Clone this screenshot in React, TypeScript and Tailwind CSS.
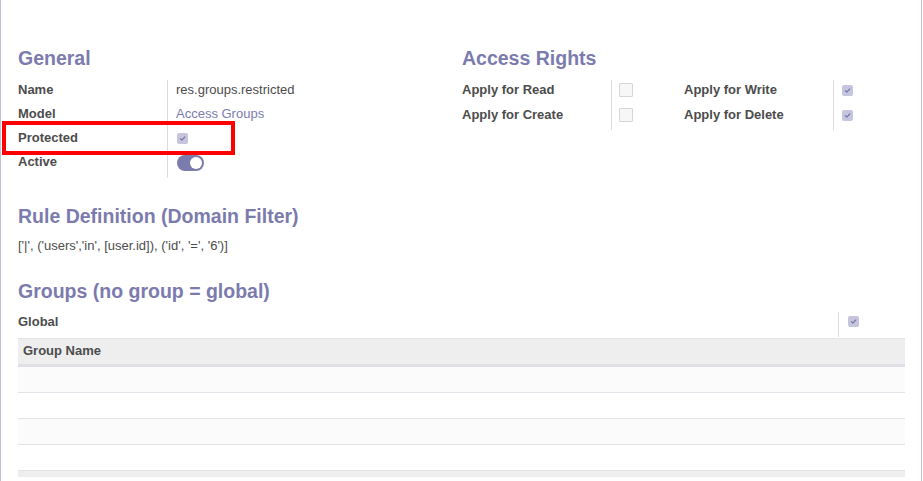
import React from "react";

const font = { fontFamily: '"Liberation Sans", Arial, sans-serif' };

function CheckedBox() {
  return (
    <span className="flex h-[11px] w-[11px] shrink-0 items-center justify-center rounded-[2px] bg-[#c6c5dd]">
      <svg width="7" height="7" viewBox="0 0 8 8" fill="none">
        <path d="M1.5 4.2L3.2 5.8L6.6 2.3" stroke="#7473a6" strokeWidth="1.3" strokeLinecap="round" strokeLinejoin="round" />
      </svg>
    </span>
  );
}

function EmptyBox() {
  return <span className="block h-[14px] w-[14px] shrink-0 rounded-[1px] border border-[#d6d6d6] bg-[#f7f7f7]" />;
}

function Toggle() {
  return (
    <span className="flex h-[16px] w-[27px] items-center justify-end rounded-full bg-[#7c7bad] pr-[2px]">
      <span className="h-[12px] w-[12px] rounded-full bg-white" />
    </span>
  );
}

function Heading({ children }: { children: React.ReactNode }) {
  return <h2 className="h-[24px] text-[19.5px] font-bold leading-[24px] text-[#7c7bad]">{children}</h2>;
}

const labelCls = "w-[150px] border-r border-[#dcdcdc] pt-px text-[13px] font-bold leading-[18px] text-[#4c4c4c]";

function FieldRow({
  label,
  height,
  children,
}: {
  label: string;
  height: string;
  children: React.ReactNode;
}) {
  return (
    <div className={`flex ${height}`}>
      <div className={labelCls}>{label}</div>
      <div className="flex items-start pl-[8px] pt-px text-[13px] leading-[18px]">{children}</div>
    </div>
  );
}

function RightsRow({
  left,
  right,
}: {
  left: string;
  right: string;
}) {
  return (
    <div className="flex h-[25px]">
      <div className={labelCls}>{left}</div>
      <div className="flex w-[72px] items-start pl-[7px] pt-[3px]">
        <EmptyBox />
      </div>
      <div className={labelCls}>{right}</div>
      <div className="flex items-start pl-[8px] pt-[5px]">
        <CheckedBox />
      </div>
    </div>
  );
}

export default function App() {
  const rows = [0, 1, 2, 3];
  return (
    <div className="min-h-[481px] bg-white" style={font}>
      <div className="relative min-h-[481px] w-[922px] border-x border-[#c4c3d6] pl-[17px] pr-[16px] pt-[46px] text-[#4c4c4c]">
        <div className="grid grid-cols-[444px_443px]">
          <div>
            <Heading>General</Heading>
            <div className="mt-[10px]">
              <FieldRow label="Name" height="h-[24px]">
                <span className="text-[#4c4c4c]">res.groups.restricted</span>
              </FieldRow>
              <FieldRow label="Model" height="h-[24px]">
                <span className="text-[#7c7bad]">Access Groups</span>
              </FieldRow>
              <FieldRow label="Protected" height="h-[24px]">
                <span className="flex pl-[1px] pt-[4px]">
                  <CheckedBox />
                </span>
              </FieldRow>
              <FieldRow label="Active" height="h-[26px]">
                <span className="flex pl-[1px] pt-[2px]">
                  <Toggle />
                </span>
              </FieldRow>
            </div>
          </div>
          <div>
            <Heading>Access Rights</Heading>
            <div className="mt-[10px]">
              <RightsRow left="Apply for Read" right="Apply for Write" />
              <RightsRow left="Apply for Create" right="Apply for Delete" />
            </div>
          </div>
        </div>

        <div className="mt-[26px]">
          <Heading>Rule Definition (Domain Filter)</Heading>
        </div>
        <p className="mt-[9px] text-[13px] leading-[18px] text-[#4c4c4c]">
          ['|', ('users','in', [user.id]), ('id', '=', '6')]
        </p>

        <div className="mt-[24px]">
          <Heading>Groups (no group = global)</Heading>
        </div>
        <div className="mt-[9px] flex h-[25px]">
          <div className="w-[821px] border-r border-[#dcdcdc] pt-px text-[13px] font-bold leading-[18px] text-[#4c4c4c]">
            Global
          </div>
          <div className="flex items-start pl-[9px] pt-[4px]">
            <CheckedBox />
          </div>
        </div>

        <div className="mt-px">
          <div className="flex h-[29px] items-center border-t border-b-[3px] border-t-[#e4e4e4] border-b-[#dfe0e6] bg-[#eeeeee] pl-[5px] pb-[2px] text-[13px] font-bold text-[#4c4c4c]">
            Group Name
          </div>
          {rows.map((r) => (
            <div
              key={r}
              className={`h-[26px] border-b border-[#e2e3e8] ${r % 2 === 0 ? "bg-[#fbfbfb]" : "bg-white"}`}
            />
          ))}
          <div className="h-[6px] bg-[#eeeeee]" />
        </div>

        <div className="pointer-events-none absolute left-[1px] top-[121px] h-[34px] w-[233px] border-[4.5px] border-[#ff0000]" />
      </div>
    </div>
  );
}
